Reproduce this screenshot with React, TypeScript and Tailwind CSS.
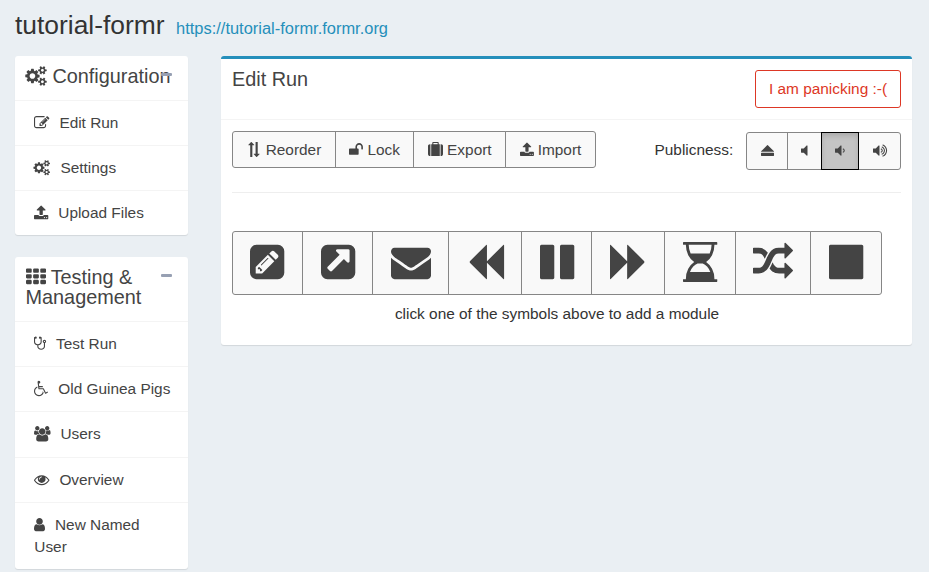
import React from 'react';

type Glyph = { x?: number; w: number; d: string };

const speaker =
  'v1088q0 26-19 45t-45 19-45-19l-333-333h-262q-26 0-45-19t-19-45v-384q0-26 19-45t45-19h262l333-333q19-19 45-19t45 19 19 45z';
const waveNear =
  'm384 544q0 76-42.5 141.5t-112.5 93.5q-10 5-25 5-26 0-45-18.5t-19-45.5q0-21 12-35.5t29-25 34-23 29-36 12-56.5-12-56.5-29-36-34-23-29-25-12-35.5q0-27 19-45.5t45-18.5q15 0 25 5 70 27 112.5 93t42.5 142z';
const wavesFar =
  'm256 0q0 153-85 282.5t-225 188.5q-13 5-25 5-27 0-46-19t-19-45q0-39 39-59 56-29 76-44 74-54 115.5-135.5t41.5-173.5-41.5-173.5-115.5-135.5q-20-15-76-44-39-20-39-59 0-26 19-45t45-19q13 0 26 5 140 59 225 188.5t85 282.5zm256 0q0 230-127 422.5t-338 283.5q-13 5-26 5-26 0-45-19t-19-45q0-36 39-59 7-4 22.5-10.5t22.5-10.5q46-25 82-51 123-91 192-227t69-289-69-289-192-227q-36-26-82-51-7-4-22.5-10.5t-22.5-10.5q-39-23-39-59 0-26 19-45t45-19q13 0 26 5 211 91 338 283.5t127 422.5z';
const roundedSquare =
  'v960q0 119-84.5 203.5t-203.5 84.5h-960q-119 0-203.5-84.5t-84.5-203.5v-960q0-119 84.5-203.5t203.5-84.5h960q119 0 203.5 84.5t84.5 203.5z';
const cell =
  'v192q0 40-28 68t-68 28h-320q-40 0-68-28t-28-68v-192q0-40 28-68t68-28h320q40 0 68 28t28 68z';

const glyphs = {
  cogs: { w: 1920, d: 'M832 896q0-106-75-181t-181-75-181 75-75 181 75 181 181 75 181-75 75-181zm768 512q0-52-38-90t-90-38-90 38-38 90q0 53 37.5 90.5t90.5 37.5 90.5-37.5 37.5-90.5zm0-1024q0-52-38-90t-90-38-90 38-38 90q0 53 37.5 90.5t90.5 37.5 90.5-37.5 37.5-90.5zm-384 421v185q0 10-7 19.5t-16 10.5l-155 24q-11 35-32 76 34 48 90 115 7 11 7 20 0 12-7 19-23 30-82.5 89.5t-78.5 59.5q-11 0-21-7l-115-90q-37 19-77 31-11 108-23 155-7 24-30 24h-186q-11 0-20-7.5t-10-17.5l-23-153q-34-10-75-31l-118 89q-7 7-20 7-11 0-21-8-144-133-144-160 0-9 7-19 10-14 41-53t47-61q-23-44-35-82l-152-24q-10-1-17-9.5t-7-19.5v-185q0-10 7-19.5t16-10.5l155-24q11-35 32-76-34-48-90-115-7-11-7-20 0-12 7-20 22-30 82-89t79-59q11 0 21 7l115 90q34-18 77-32 11-108 23-154 7-24 30-24h186q11 0 20 7.5t10 17.5l23 153q34 10 75 31l118-89q8-7 20-7 11 0 21 8 144 133 144 160 0 8-7 19-12 16-42 54t-45 60q23 48 34 82l152 23q10 2 17 10.5t7 19.5zm640 533v140q0 16-149 31-12 27-30 52 51 113 51 138 0 4-4 7-122 71-124 71-8 0-46-47t-52-68q-20 2-30 2t-30-2q-14 21-52 68t-46 47q-2 0-124-71-4-3-4-7 0-25 51-138-18-25-30-52-149-15-149-31v-140q0-16 149-31 13-29 30-52-51-113-51-138 0-4 4-7 4-2 35-20t59-34 30-16q8 0 46 46.5t52 67.5q20-2 30-2t30 2q51-71 92-112l6-2q4 0 124 70 4 3 4 7 0 25-51 138 17 23 30 52 149 15 149 31zm0-1024v140q0 16-149 31-12 27-30 52 51 113 51 138 0 4-4 7-122 71-124 71-8 0-46-47t-52-68q-20 2-30 2t-30-2q-14 21-52 68t-46 47q-2 0-124-71-4-3-4-7 0-25 51-138-18-25-30-52-149-15-149-31v-140q0-16 149-31 13-29 30-52-51-113-51-138 0-4 4-7 4-2 35-20t59-34 30-16q8 0 46 46.5t52 67.5q20-2 30-2t30 2q51-71 92-112l6-2q4 0 124 70 4 3 4 7 0 25-51 138 17 23 30 52 149 15 149 31z' },
  edit: { w: 1792, d: 'M888 1184l116-116-152-152-116 116v56h96v96h56zm440-720q-16-16-33 1l-350 350q-17 17-1 33t33-1l350-350q17-17 1-33zm80 594v190q0 119-84.5 203.5t-203.5 84.5h-832q-119 0-203.5-84.5t-84.5-203.5v-832q0-119 84.5-203.5t203.5-84.5h832q63 0 117 25 15 7 18 23 3 17-9 29l-49 49q-14 14-32 8-23-6-45-6h-832q-66 0-113 47t-47 113v832q0 66 47 113t113 47h832q66 0 113-47t47-113v-126q0-13 9-22l64-64q15-15 35-7t20 29zm-96-738l288 288-672 672h-288v-288zm444 132l-92 92-288-288 92-92q28-28 68-28t68 28l152 152q28 28 28 68t-28 68z' },
  upload: { x: 64, w: 1664, d: 'M1344 1472q0-26-19-45t-45-19-45 19-19 45 19 45 45 19 45-19 19-45zm256 0q0-26-19-45t-45-19-45 19-19 45 19 45 45 19 45-19 19-45zm128-224v320q0 40-28 68t-68 28h-1472q-40 0-68-28t-28-68v-320q0-40 28-68t68-28h427q21 56 70.5 92t110.5 36h256q61 0 110.5-36t70.5-92h427q40 0 68 28t28 68zm-325-648q-17 40-59 40h-256v448q0 26-19 45t-45 19h-256q-26 0-45-19t-19-45v-448h-256q-42 0-59-40-17-39 14-69l448-448q18-19 45-19t45 19l448 448q31 30 14 69z' },
  th: { w: 1792, d: [512, 1152, 1792].flatMap((x) => [224, 736, 1248].map((y) => `M${x} ${y}${cell}`)).join('') },
  stethoscope: { x: 64, w: 1408, d: 'M1344 640q0-26-19-45t-45-19-45 19-19 45 19 45 45 19 45-19 19-45zm128 0q0 62-35.5 111t-92.5 70v395q0 159-131.5 271.5t-316.5 112.5-316.5-112.5-131.5-271.5v-132q-164-20-274-128t-110-252v-512q0-26 19-45t45-19q6 0 16 2 17-30 47-48t65-18q53 0 90.5 37.5t37.5 90.5-37.5 90.5-90.5 37.5q-33 0-64-18v402q0 106 94 181t226 75 226-75 94-181v-402q-31 18-64 18-53 0-90.5-37.5t-37.5-90.5 37.5-90.5 90.5-37.5q35 0 65 18t47 48q10-2 16-2 26 0 45 19t19 45v512q0 144-110 252t-274 128v132q0 106 94 181t226 75 226-75 94-181v-395q-57-21-92.5-70t-35.5-111q0-80 56-136t136-56 136 56 56 136z' },
  wheelchair: { w: 1664, d: 'M1023 1157l102 204q-58 179-210 290t-339 111q-156 0-288.5-77.5t-210-210-77.5-288.5q0-181 104.5-330t274.5-211l17 131q-122 54-195 165.5t-73 244.5q0 185 131.5 316.5t316.5 131.5q126 0 232.5-65t165-175.5 49.5-236.5zm548 77l58 114-256 128q-13 7-29 7-40 0-57-35l-239-477h-472q-24 0-42.5-16.5t-21.5-40.5l-96-779q-2-17 6-42 14-51 57-82.5t97-31.5q66 0 113 47t47 113q0 69-52 117.5t-120 41.5l37 289h423v128h-407l16 128h455q40 0 57 35l228 455z' },
  users: { x: 64, w: 1920, d: 'M657 896q-162 5-265 128h-134q-82 0-138-40.5t-56-118.5q0-353 124-353 6 0 43.5 21t97.5 42.5 119 21.5q67 0 133-23-5 37-5 66 0 159 93 293zm1071 637q0 120-73 189.5t-194 69.5h-874q-121 0-194-69.5t-73-189.5q0-53 3.5-103.5t14-109 26.5-108.5 43-97.5 62-81 85.5-53.5 111.5-20q10 0 43 21.5t73 48 107 48 135 21.5 135-21.5 107-48 73-48 43-21.5q61 0 111.5 20t85.5 53.5 62 81 43 97.5 26.5 108.5 14 109 3.5 103.5zm-1024-1277q0 106-75 181t-181 75-181-75-75-181 75-181 181-75 181 75 75 181zm704 384q0 159-112.5 271.5t-271.5 112.5-271.5-112.5-112.5-271.5 112.5-271.5 271.5-112.5 271.5 112.5 112.5 271.5zm576 225q0 78-56 118.5t-138 40.5h-134q-103-123-265-128 93-134 93-293 0-29-5-66 66 23 133 23 59 0 119-21.5t97.5-42.5 43.5-21q124 0 124 353zm-128-609q0 106-75 181t-181 75-181-75-75-181 75-181 181-75 181 75 75 181z' },
  eye: { w: 1792, d: 'M1664 960q-152-236-381-353 61 104 61 225 0 185-131.5 316.5t-316.5 131.5-316.5-131.5-131.5-316.5q0-121 61-225-229 117-381 353 133 205 333.5 326.5t434.5 121.5 434.5-121.5 333.5-326.5zm-720-384q0-20-14-34t-34-14q-125 0-214.5 89.5t-89.5 214.5q0 20 14 34t34 14 34-14 14-34q0-86 61-147t147-61q20 0 34-14t14-34zm848 384q0 34-20 69-140 230-376.5 368.5t-499.5 138.5-499.5-139-376.5-368q-20-35-20-69t20-69q140-229 376.5-368t499.5-139 499.5 139 376.5 368q20 35 20 69z' },
  user: { x: 256, w: 1280, d: 'M1536 1399q0 109-62.5 187t-150.5 78h-854q-88 0-150.5-78t-62.5-187q0-85 8.5-160.5t31.5-152 58.5-131 94-89 134.5-34.5q131 128 313 128t313-128q76 0 134.5 34.5t94 89 58.5 131 31.5 152 8.5 160.5zm-256-887q0 159-112.5 271.5t-271.5 112.5-271.5-112.5-112.5-271.5 112.5-271.5 271.5-112.5 271.5 112.5 112.5 271.5z' },
  exchange: { w: 1792, d: 'M1792 1184v192q0 13-9.5 22.5t-22.5 9.5h-1376v192q0 13-9.5 22.5t-22.5 9.5q-12 0-24-10l-319-320q-9-9-9-22 0-14 9-23l320-320q9-9 23-9 13 0 22.5 9.5t9.5 22.5v192h1376q13 0 22.5 9.5t9.5 22.5zm0-544q0 14-9 23l-320 320q-9 9-23 9-13 0-22.5-9.5t-9.5-22.5v-192h-1376q-13 0-22.5-9.5t-9.5-22.5v-192q0-13 9.5-22.5t22.5-9.5h1376v-192q0-14 9-23t23-9q12 0 24 10l319 319q9 9 9 23z' },
  unlock: { x: 64, w: 1664, d: 'M1728 576v256q0 26-19 45t-45 19h-64q-26 0-45-19t-19-45v-256q0-106-75-181t-181-75-181 75-75 181v192h96q40 0 68 28t28 68v576q0 40-28 68t-68 28h-960q-40 0-68-28t-28-68v-576q0-40 28-68t68-28h672v-192q0-185 131.5-316.5t316.5-131.5 316.5 131.5 131.5 316.5z' },
  suitcase: { w: 1792, d: 'M640 256h512v-128h-512v128zm-352 0v1408h-64q-92 0-158-66t-66-158v-960q0-92 66-158t158-66h64zm1120 0v1408h-1024v-1408h128v-160q0-40 28-68t68-28h576q40 0 68 28t28 68v160h128zm384 224v960q0 92-66 158t-158 66h-64v-1408h64q92 0 158 66t66 158z' },
  eject: { w: 1538, d: 'M14 979l710-710q19-19 45-19t45 19l710 710q19 19 13 32t-32 13h-1472q-26 0-32-13t13-32zm1459 557h-1408q-26 0-45-19t-19-45v-256q0-26 19-45t45-19h1408q26 0 45 19t19 45v256q0 26-19 45t-45 19z' },
  volumeOff: { w: 768, d: 'M768 352' + speaker },
  volumeDown: { w: 1152, d: 'M768 352' + speaker + waveNear },
  volumeUp: { w: 1664, d: 'M768 352' + speaker + waveNear + wavesFar },
  pencilSquare: { w: 1536, d: 'M404 1108l152 152-52 52h-56v-96h-96v-56zm414-390q14 13-3 30l-291 291q-17 17-30 3-14-13 3-30l291-291q17-17 30-3zm-274 690l544-544-288-288-544 544v288h288zm608-608l92-92q28-28 28-68t-28-68l-152-152q-28-28-68-28t-68 28l-92 92zm384-384' + roundedSquare },
  linkSquare: { w: 1536, d: 'M1280 864v-480q0-26-19-45t-45-19h-480q-42 0-59 39-17 41 14 70l144 144-534 534q-19 19-19 45t19 45l102 102q19 19 45 19t45-19l534-534 144 144q18 19 45 19 12 0 25-5 39-17 39-59zm256-448' + roundedSquare },
  envelope: { w: 1792, d: 'M1792 710v794q0 66-47 113t-113 47h-1472q-66 0-113-47t-47-113v-794q44 49 101 87 362 246 497 345 57 42 92.5 65.5t94.5 48 110 24.5h2q51 0 110-24.5t94.5-48 92.5-65.5q170-123 498-345 57-39 100-87zm0-294q0 79-49 151t-122 123q-376 261-468 325-10 7-42.5 31t-54 38.5-52 32.5-57.5 27-50 9h-2q-23 0-50-9t-57.5-27-52-32.5-54-38.5-42.5-31q-91-64-262-182.5t-205-142.5q-62-42-117-115.5t-55-136.5q0-78 41.5-130t118.5-52h1472q65 0 112.5 47t47.5 113z' },
  backward: { w: 1664, d: 'M1617 141q19-19 32-13t13 32v1472q0 26-13 32t-32-13l-710-710q-9-9-13-19v710q0 26-13 32t-32-13l-710-710q-19-19-19-45t19-45l710-710q19-19 32-13t13 32v710q4-10 13-19z' },
  pause: { w: 1536, d: 'M1536 192v1408q0 26-19 45t-45 19h-512q-26 0-45-19t-19-45v-1408q0-26 19-45t45-19h512q26 0 45 19t19 45zm-896 0v1408q0 26-19 45t-45 19h-512q-26 0-45-19t-19-45v-1408q0-26 19-45t45-19h512q26 0 45 19t19 45z' },
  forward: { w: 1664, d: 'M45 1651q-19 19-32 13t-13-32v-1472q0-26 13-32t32 13l710 710q8 8 13 19v-710q0-26 13-32t32 13l710 710q19 19 19 45t-19 45l-710 710q-19 19-32 13t-13-32v-710q-5 10-13 19z' },
  hourglass: { w: 1536, d: 'M1408 128q0 261-106.5 461.5t-266.5 306.5q160 106 266.5 306.5t106.5 461.5h96q14 0 23 9t9 23v64q0 14-9 23t-23 9h-1472q-14 0-23-9t-9-23v-64q0-14 9-23t23-9h96q0-261 106.5-461.5t266.5-306.5q-160-106-266.5-306.5t-106.5-461.5h-96q-14 0-23-9t-9-23v-64q0-14 9-23t23-9h1472q14 0 23 9t9 23v64q0 14-9 23t-23 9h-96zm-128 0h-1024q0 206 85 384h854q85-178 85-384zm-57 1216q-54-141-145.5-241.5t-194.5-142.5h-230q-103 42-194.5 142.5t-145.5 241.5h910z' },
  random: { w: 1792, d: 'M666 481q-60 92-137 273-22-45-37-72.5t-40.5-63.5-51-56.5-63-35-81.5-14.5h-224q-14 0-23-9t-9-23v-192q0-14 9-23t23-9h224q250 0 410 225zm1126 799q0 14-9 23l-320 320q-9 9-23 9-13 0-22.5-9.5t-9.5-22.5v-192q-32 0-85 .5t-81 1-73-1-71-5-64-10.5-63-18.5-58-28.5-59-40-55-53.5-56-69.5q59-93 136-273 22 45 37 72.5t40.5 63.5 51 56.5 63 35 81.5 14.5h256v-192q0-14 9-23t23-9q12 0 24 10l319 319q9 9 9 23zm0-896q0 14-9 23l-320 320q-9 9-23 9-13 0-22.5-9.5t-9.5-22.5v-192h-256q-48 0-87 15t-69 45-51 61.5-45 77.5q-32 62-78 171-29 66-49.5 111t-54 105-64 100-74 83-90 68.5-106.5 42-128 16.5h-224q-14 0-23-9t-9-23v-192q0-14 9-23t23-9h224q48 0 87-15t69-45 51-61.5 45-77.5q32-62 78-171 29-66 49.5-111t54-105 64-100 74-83 90-68.5 106.5-42 128-16.5h256v-192q0-14 9-23t23-9q12 0 24 10l319 319q9 9 9 23z' },
  stop: { w: 1536, d: 'M1536 192v1408q0 26-19 45t-45 19h-1408q-26 0-45-19t-19-45v-1408q0-26 19-45t45-19h1408q26 0 45 19t19 45z' },
} satisfies Record<string, Glyph>;

type IconName = keyof typeof glyphs;

function Icon({ name, size = 15, className = '' }: { name: IconName; size?: number; className?: string }) {
  const g: Glyph = glyphs[name];
  return (
    <svg
      className={`inline-block shrink-0 overflow-visible fill-current ${className}`}
      width={(g.w * size) / 1792}
      height={size}
      viewBox={`${g.x ?? 0} 0 ${g.w} 1792`}
      aria-hidden="true"
    >
      <path d={g.d} />
    </svg>
  );
}

type Item = { icon: IconName; label: string };

function SideBox({ icon, title, items, className }: { icon: IconName; title: string; items: Item[]; className: string }) {
  return (
    <section className={`relative rounded-[3px] bg-white shadow-[0_1px_1px_rgba(0,0,0,0.1)] ${className}`}>
      <h3 className="border-b border-[#f4f4f4] px-[10.5px] pt-[10px] pb-[14px] text-[19.85px] leading-5">
        <span className="flow-root">
          <Icon name={icon} size={20} className="-my-1 align-[1px]" /> {title}
        </span>
      </h3>
      <span className="absolute top-[17px] right-[16.5px] h-[3px] w-[10.5px] rounded-[1px] bg-[#97a0b3]" />
      <ul>
        {items.map((it) => (
          <li
            key={it.label}
            className="border-b border-[#f4f4f4] py-[11.1px] pr-[15px] pl-[19.3px] text-[15.4px] leading-[22px] last:border-b-0"
          >
            <Icon name={it.icon} size={15.4} className="mr-[9.7px] align-[-2.4px]" />
            {it.label}
          </li>
        ))}
      </ul>
    </section>
  );
}

const groupButton =
  'flex items-center border border-[#868686] bg-[#f9f9f9] -ml-px first:ml-0 first:rounded-l-[3px] last:rounded-r-[3px]';

const actions: Item[] = [
  { icon: 'exchange', label: 'Reorder' },
  { icon: 'unlock', label: 'Lock' },
  { icon: 'suitcase', label: 'Export' },
  { icon: 'upload', label: 'Import' },
];
const levels: IconName[] = ['eject', 'volumeOff', 'volumeDown', 'volumeUp'];
const modules: IconName[] = [
  'pencilSquare', 'linkSquare', 'envelope', 'backward', 'pause', 'forward', 'hourglass', 'random', 'stop',
];

export default function App() {
  return (
    <div className="h-[572px] w-[929px] overflow-hidden bg-[#eaeff3] px-[15px] font-['Liberation_Sans',Arial,sans-serif] text-[15.4px] text-[#444]">
      <header className="flex h-14 items-baseline pt-[10px] text-[#333]">
        <h1 className="text-[26.4px] leading-[30px]">tutorial-formr</h1>
        <a className="ml-[11.5px] text-[16.45px] text-[#258fbb]">https://tutorial-formr.formr.org</a>
      </header>
      <div className="flex items-start">
        <aside className="w-[173px] shrink-0">
          <SideBox
            className="mb-[22px] h-[179px]"
            icon="cogs"
            title="Configuration"
            items={[
              { icon: 'edit', label: 'Edit Run' },
              { icon: 'cogs', label: 'Settings' },
              { icon: 'upload', label: 'Upload Files' },
            ]}
          />
          <SideBox
            className=""
            icon="th"
            title="Testing & Management"
            items={[
              { icon: 'stethoscope', label: 'Test Run' },
              { icon: 'wheelchair', label: 'Old Guinea Pigs' },
              { icon: 'users', label: 'Users' },
              { icon: 'eye', label: 'Overview' },
              { icon: 'user', label: 'New Named User' },
            ]}
          />
        </aside>
        <main className="ml-[33px] h-[289px] w-[691px] rounded-[3px] border-t-[3px] border-[#258fbb] bg-white shadow-[0_1px_1px_rgba(0,0,0,0.1)]">
          <div className="flex h-[61px] items-start justify-between border-b border-[#f4f4f4] px-[11px] pt-[10px]">
            <h3 className="text-[19.85px] leading-5">Edit Run</h3>
            <button className="mt-px h-[38px] w-[146px] rounded-[3px] border border-[#dd3725] text-[15.4px] text-[#dd3725]">
              I am panicking :-(
            </button>
          </div>
          <div className="px-[11px] pt-[11px]">
            <div className="flex h-[62px] items-start justify-between border-b border-[#eee]">
              <div className="flex h-[37px]">
                {actions.map((a) => (
                  <button key={a.label} className={`${groupButton} gap-[4.2px] px-[13.5px]`}>
                    <Icon name={a.icon} className={a.icon === 'exchange' ? 'rotate-90' : ''} />
                    <span className="pt-px">{a.label}</span>
                  </button>
                ))}
              </div>
              <div className="mt-px flex h-[38px] items-center text-[#333]">
                <span className="mr-[13px] pb-[2px]">Publicness:</span>
                <div className="flex h-full text-[#444]">
                  {levels.map((l) => (
                    <button
                      key={l}
                      className={
                        l === 'volumeDown'
                          ? 'relative -ml-px flex items-center border border-black bg-[#c4c4c4] px-[13.3px] pb-px shadow-[inset_0_3px_5px_rgba(0,0,0,0.125)]'
                          : `${groupButton} px-[13.3px] pb-px`
                      }
                    >
                      <Icon name={l} size={15.2} />
                    </button>
                  ))}
                </div>
              </div>
            </div>
            <div className="mt-[38px] flex h-[64px] w-[650px]">
              {modules.map((m) => (
                <button key={m} className={`${groupButton} px-[17.45px] pb-[2px]`}>
                  <Icon name={m} size={40} />
                </button>
              ))}
            </div>
            <p className="mt-[8px] w-[650px] text-center leading-[21px] text-[#333]">
              click one of the symbols above to add a module
            </p>
          </div>
        </main>
      </div>
    </div>
  );
}
